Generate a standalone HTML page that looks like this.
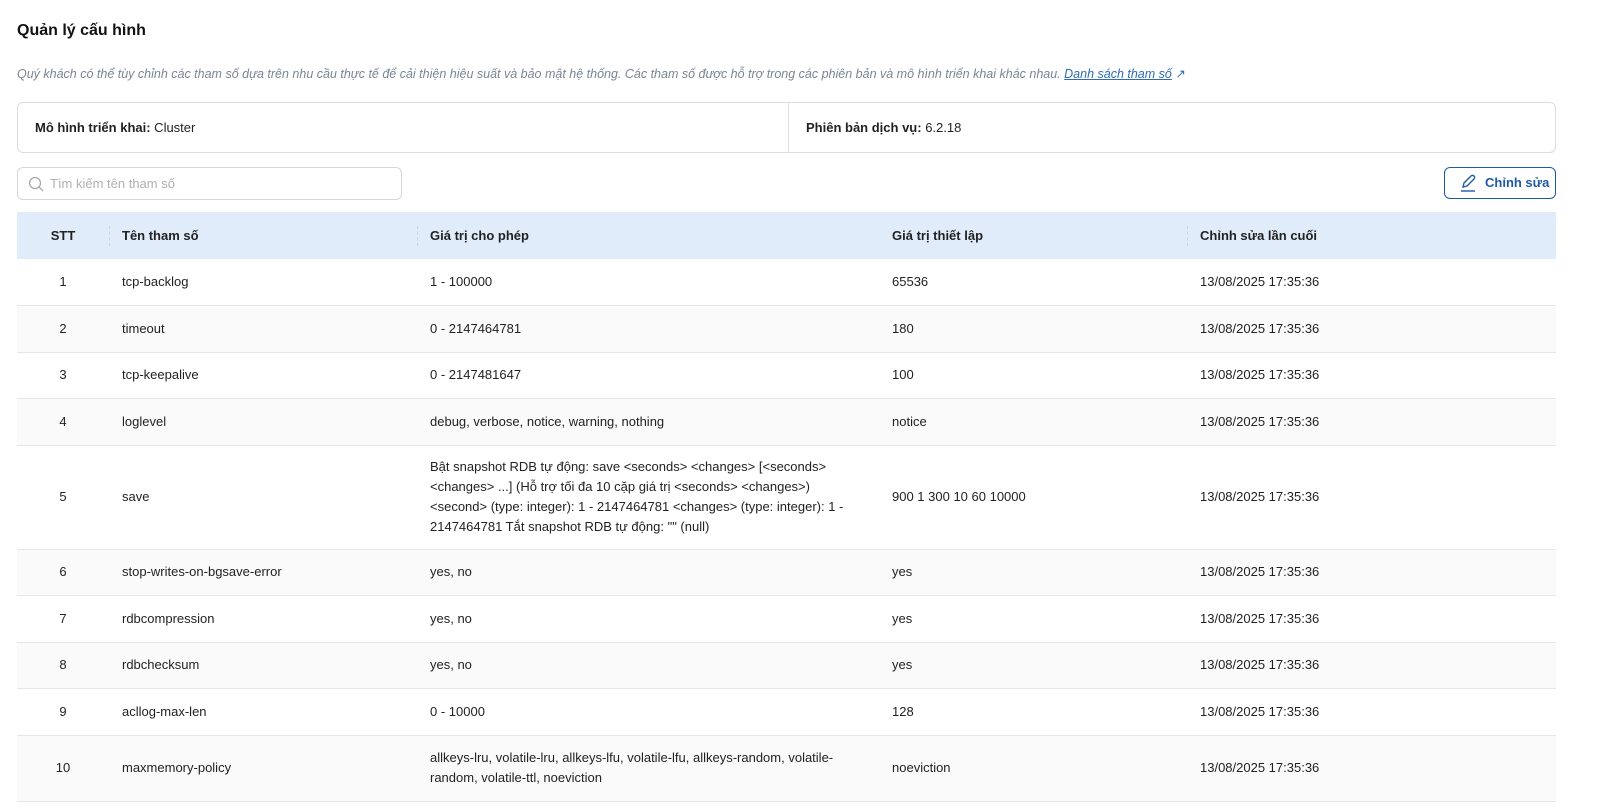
<!DOCTYPE html>
<html><head><meta charset="utf-8"><style>
*{box-sizing:border-box;margin:0;padding:0}
body{width:1608px;height:808px;overflow:hidden;background:#fff;font-family:"Liberation Sans",Arial,sans-serif;color:#222;font-size:13px}
.t{position:absolute;left:17px;top:22px;font-size:16px;font-weight:bold;color:#111}
.d{position:absolute;left:17px;top:66px;font-size:12.5px;font-style:italic;color:#7a8593}
.d a{color:#2f6bb5;text-decoration:underline}
.info{position:absolute;left:17px;top:102px;width:1539px;height:51px;border:1px solid #dcdcdc;border-radius:6px;display:flex}
.info div{flex:0 0 770px;padding:0 17px;line-height:49px;font-size:13px}
.info div+div{border-left:1px solid #dcdcdc;flex:1}
.s{position:absolute;left:17px;top:167px;width:385px;height:33px;border:1px solid #d6d6d6;border-radius:6px;color:#b0b0b0;line-height:31px;padding-left:32px;font-size:13px}
.s svg{position:absolute;left:10px;top:8px}
.b{position:absolute;left:1444px;top:167px;width:112px;height:32px;border:1px solid #1f5aa6;border-radius:6px;color:#1f5aa6;font-weight:bold;line-height:30px;padding-left:40px;font-size:13px}
.b svg{position:absolute;left:14px;top:6px}
table{position:absolute;left:17px;top:212px;width:1539px;border-collapse:collapse}
th{background:#e1ecfa;height:47px;text-align:left;font-weight:bold;font-size:13px;position:relative;color:#222}
td{border-bottom:1px solid #e6e6e6;height:46.5px;font-size:13px;line-height:20px;vertical-align:middle}
th.sep:before{content:"";position:absolute;left:0;top:14px;height:20px;border-left:1px dashed #c9d3df}
.c1{text-align:center;width:92px}
.c2{padding-left:13px;width:308px}
.c3{padding-left:13px;width:462px}
.c4{padding-left:13px;width:308px}
.c5{padding-left:13px}
tr:nth-child(odd) td{background:#fafafa}
</style></head><body>
<div class="t">Quản lý cấu hình</div>
<div class="d">Quý khách có thể tùy chỉnh các tham số dựa trên nhu cầu thực tế để cải thiện hiệu suất và bảo mật hệ thống. Các tham số được hỗ trợ trong các phiên bản và mô hình triển khai khác nhau. <a>Danh sách tham số</a> <span style="color:#2f6bb5;font-style:normal">↗</span></div>
<div class="info"><div><b>Mô hình triển khai:</b> Cluster</div><div><b>Phiên bản dịch vụ:</b> 6.2.18</div></div>
<div class="s"><svg width="16" height="16" viewBox="0 0 16 16" fill="none" stroke="#aaa" stroke-width="1.3"><circle cx="7" cy="7" r="5.5"/><path d="M11 11l4 4"/></svg>Tìm kiếm tên tham số</div>
<div class="b"><svg width="18" height="18" viewBox="0 0 18 18" fill="none" stroke="#1f5aa6" stroke-width="1.4"><path d="M4 13l1-4 7-7a2 2 0 013 3l-7 7-4 1z"/><path d="M2 17h14"/></svg>Chỉnh sửa</div>
<table>
<tr><th class="c1">STT</th><th class="c2 sep">Tên tham số</th><th class="c3 sep">Giá trị cho phép</th><th class="c4">Giá trị thiết lập</th><th class="c5 sep">Chỉnh sửa lần cuối</th></tr>
<tr><td class="c1">1</td><td class="c2">tcp-backlog</td><td class="c3">1 - 100000</td><td class="c4">65536</td><td class="c5">13/08/2025 17:35:36</td></tr>
<tr><td class="c1">2</td><td class="c2">timeout</td><td class="c3">0 - 2147464781</td><td class="c4">180</td><td class="c5">13/08/2025 17:35:36</td></tr>
<tr><td class="c1">3</td><td class="c2">tcp-keepalive</td><td class="c3">0 - 2147481647</td><td class="c4">100</td><td class="c5">13/08/2025 17:35:36</td></tr>
<tr><td class="c1">4</td><td class="c2">loglevel</td><td class="c3">debug, verbose, notice, warning, nothing</td><td class="c4">notice</td><td class="c5">13/08/2025 17:35:36</td></tr>
<tr><td class="c1" style="height:104px">5</td><td class="c2">save</td><td class="c3">Bật snapshot RDB tự động: save &lt;seconds&gt; &lt;changes&gt; [&lt;seconds&gt;<br>&lt;changes&gt; ...] (Hỗ trợ tối đa 10 cặp giá trị &lt;seconds&gt; &lt;changes&gt;)<br>&lt;second&gt; (type: integer): 1 - 2147464781 &lt;changes&gt; (type: integer): 1 -<br>2147464781 Tắt snapshot RDB tự động: "" (null)</td><td class="c4">900 1 300 10 60 10000</td><td class="c5">13/08/2025 17:35:36</td></tr>
<tr><td class="c1">6</td><td class="c2">stop-writes-on-bgsave-error</td><td class="c3">yes, no</td><td class="c4">yes</td><td class="c5">13/08/2025 17:35:36</td></tr>
<tr><td class="c1">7</td><td class="c2">rdbcompression</td><td class="c3">yes, no</td><td class="c4">yes</td><td class="c5">13/08/2025 17:35:36</td></tr>
<tr><td class="c1">8</td><td class="c2">rdbchecksum</td><td class="c3">yes, no</td><td class="c4">yes</td><td class="c5">13/08/2025 17:35:36</td></tr>
<tr><td class="c1">9</td><td class="c2">acllog-max-len</td><td class="c3">0 - 10000</td><td class="c4">128</td><td class="c5">13/08/2025 17:35:36</td></tr>
<tr><td class="c1" style="height:66px">10</td><td class="c2">maxmemory-policy</td><td class="c3">allkeys-lru, volatile-lru, allkeys-lfu, volatile-lfu, allkeys-random, volatile-<br>random, volatile-ttl, noeviction</td><td class="c4">noeviction</td><td class="c5">13/08/2025 17:35:36</td></tr>
</table>
</body></html>
